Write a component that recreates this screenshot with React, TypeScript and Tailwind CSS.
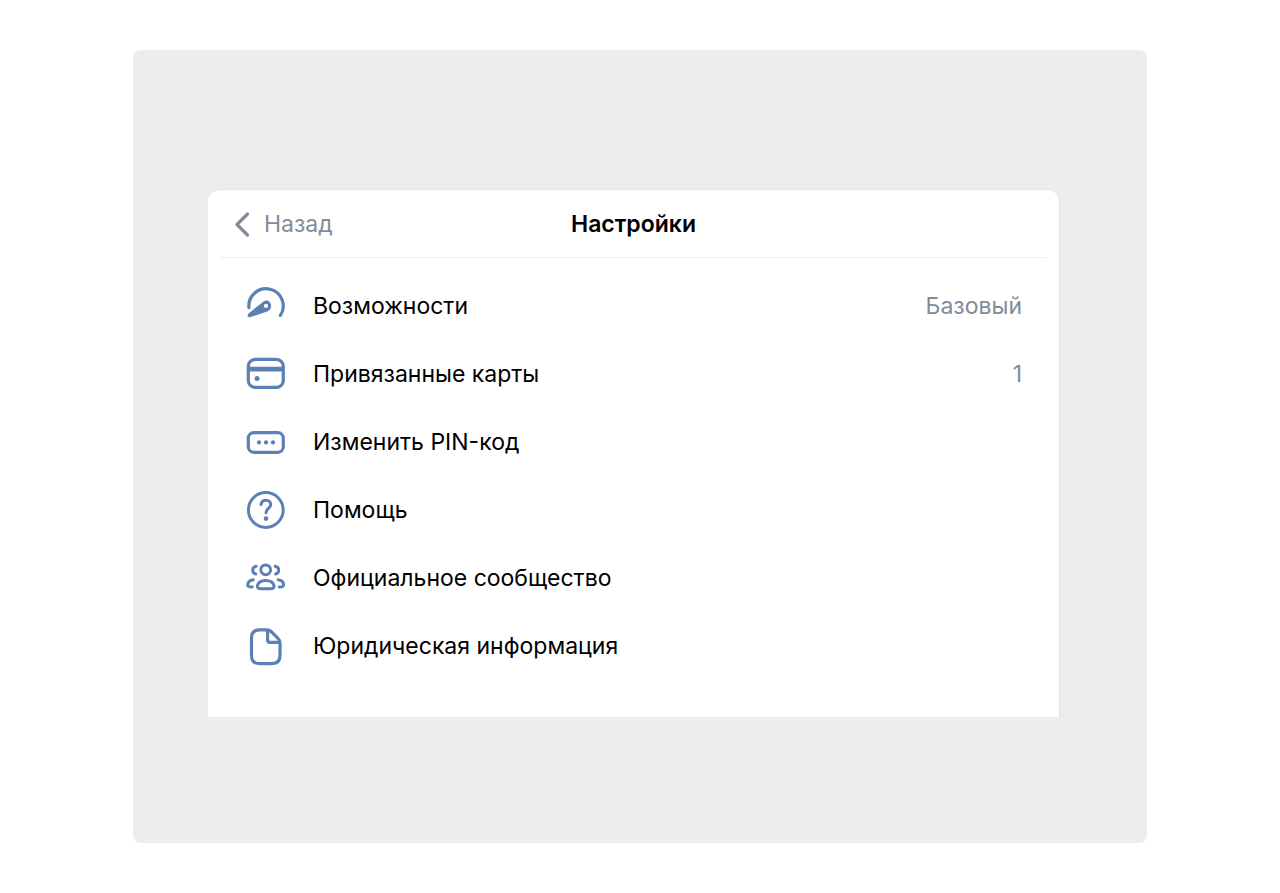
import type { ReactNode } from "react";

type SettingsItem = {
  title: string;
  icon: ReactNode;
  value?: string;
};

function Icon({ children }: { children: ReactNode }) {
  return (
    <svg
      viewBox="0 0 40 40"
      className="size-10 shrink-0"
      fill="none"
      stroke="#5b80b5"
      strokeWidth="3.2"
      strokeLinecap="round"
      strokeLinejoin="round"
      aria-hidden="true"
    >
      {children}
    </svg>
  );
}

const items: SettingsItem[] = [
  {
    title: "Возможности",
    value: "Базовый",
    icon: (
      <Icon>
        <path d="M2.9 21.6A17.2 17.2 0 1 1 34.4 29.4" />
        <path
          d="M17.6 15.4L2.6 27.4C0.6 29.2 1.6 31.8 4.4 31.1L21.8 25.2C28.4 22.2 24.2 11.4 17.6 15.4ZM20 17.8A2.1 2.1 0 1 1 20 22A2.1 2.1 0 1 1 20 17.8Z"
          fill="#5b80b5"
          fillRule="evenodd"
          stroke="none"
        />
      </Icon>
    ),
  },
  {
    title: "Привязанные карты",
    value: "1",
    icon: (
      <Icon>
        <rect x="2.3" y="5.4" width="35" height="28" rx="7" />
        <path d="M2.3 15.2H37.3" strokeWidth="4.8" strokeLinecap="butt" />
        <circle cx="11" cy="24.6" r="2.5" fill="#5b80b5" stroke="none" />
      </Icon>
    ),
  },
  {
    title: "Изменить PIN-код",
    icon: (
      <Icon>
        <rect x="2.3" y="10.7" width="35" height="19.6" rx="5.5" />
        <g fill="#5b80b5" stroke="none">
          <circle cx="13" cy="20.4" r="2.1" />
          <circle cx="20" cy="20.4" r="2.1" />
          <circle cx="27" cy="20.4" r="2.1" />
        </g>
      </Icon>
    ),
  },
  {
    title: "Помощь",
    icon: (
      <Icon>
        <circle cx="19.8" cy="20" r="17.4" strokeWidth="3" />
        <path d="M15 14.6C15.4 8.6 24.8 8.8 24.8 14.6C24.8 18.3 20 18.7 20 22.7" strokeWidth="3" />
        <circle cx="20" cy="28.6" r="2.3" fill="#5b80b5" stroke="none" />
      </Icon>
    ),
  },
  {
    title: "Официальное сообщество",
    icon: (
      <Icon>
        <g strokeWidth="3">
          <circle cx="19.7" cy="11.8" r="4.9" />
          <path d="M15 30.8H24.4C27.4 30.8 28.5 29.5 28 27.6C27.1 24 24.1 22.4 19.7 22.4S12.3 24 11.4 27.6C10.9 29.5 12 30.8 15 30.8Z" />
          <path d="M10.2 8.2C5.6 9.2 5.6 15 9.8 16" />
          <path d="M29.2 8.2C33.8 9.2 33.8 15 29.6 16" />
          <path d="M7.2 21.8C4.2 22.2 2.2 24 1.8 26.3C1.4 28.5 3 29 6.2 28.9" />
          <path d="M32.2 21.8C35.2 22.2 37.2 24 37.6 26.3C38 28.5 36.4 29 33.2 28.9" />
        </g>
      </Icon>
    ),
  },
  {
    title: "Юридическая информация",
    icon: (
      <Icon>
        <path d="M13.5 3.9H20.5C22.6 3.9 24 4.4 25.5 5.9L32 12.4C33.5 13.9 34 15.3 34 17.4V29.5C34 35.2 31.6 37.6 26 37.6H13.5C8 37.6 5.5 35.2 5.5 29.5V12C5.5 6.4 8 3.9 13.5 3.9Z" />
        <path d="M21.6 4.6V14C21.6 15.6 22.4 16.4 24 16.4H33.4" />
      </Icon>
    ),
  },
];

function Header() {
  return (
    <header className="mx-3 grid h-[68px] grid-cols-3 items-center border-b border-[#edeef0]">
      <button type="button" className="flex items-center gap-3 justify-self-start pl-3 text-[#818c99]">
        <svg
          viewBox="0 0 20 28"
          className="h-7 w-5"
          fill="none"
          stroke="currentColor"
          strokeWidth="3.2"
          strokeLinecap="round"
          strokeLinejoin="round"
          aria-hidden="true"
        >
          <path d="M15.5 4L5 14.5L15.5 25" />
        </svg>
        Назад
      </button>
      <h1 className="text-center font-semibold">Настройки</h1>
    </header>
  );
}

function App() {
  return (
    <main className="min-h-screen bg-white px-[133px] py-[50px] font-['Inter',sans-serif] text-[23px] leading-8 text-black">
      <section className="rounded-lg bg-[#ebedef] pt-[139px] pr-[87px] pb-[126px] pl-[75px]">
        <div className="rounded-t-xl border-t border-r border-[#e1e3e6] bg-white pb-[37px]">
          <Header />
          <ul className="pt-[14px]">
            {items.map((item) => (
              <li key={item.title}>
                <button type="button" className="flex h-[68px] w-full items-center pr-[37px] pl-[38px] text-left">
                  {item.icon}
                  <span className="ml-[27px] grow">{item.title}</span>
                  {item.value && <span className="text-[#818c99]">{item.value}</span>}
                </button>
              </li>
            ))}
          </ul>
        </div>
      </section>
    </main>
  );
}

export default App;
